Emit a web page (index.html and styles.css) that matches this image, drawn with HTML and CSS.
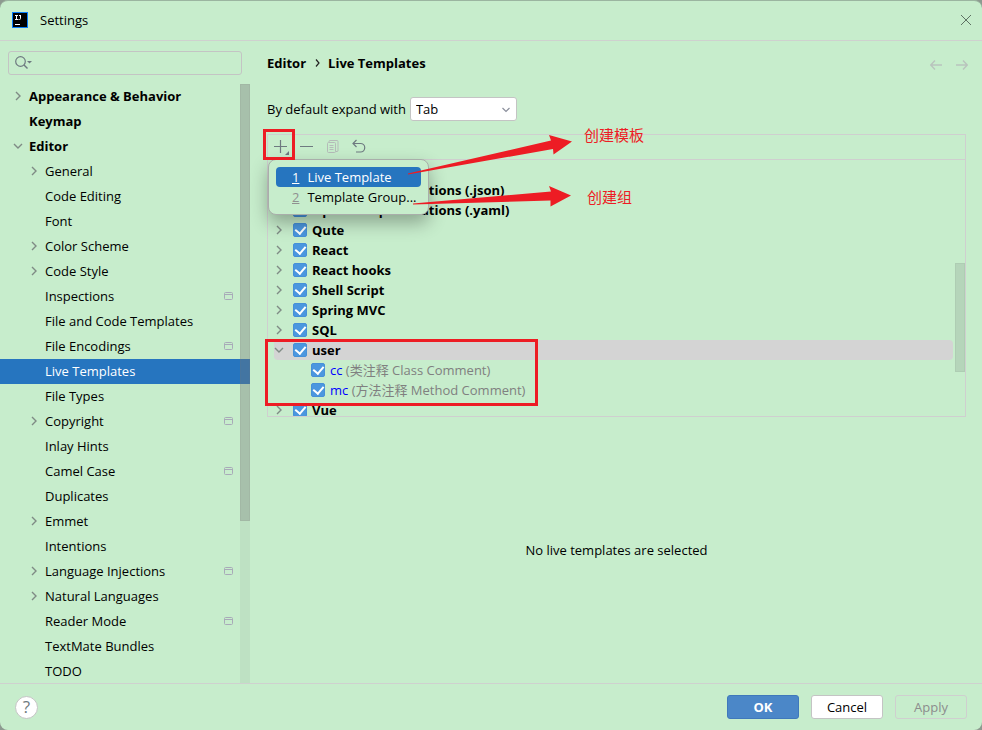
FILE: index.html
```html
<!DOCTYPE html>
<html lang="en">
<head>
<meta charset="utf-8">
<title>Settings</title>
<link rel="stylesheet" href="styles.css">
</head>
<body>
<svg class="symbols" aria-hidden="true">
  <symbol id="right" viewBox="0 0 10 10"><path d="M3 1l4 4-4 4" fill="none" stroke="#7f8b85" stroke-width="1.4"/></symbol>
  <symbol id="down" viewBox="0 0 10 10"><path d="M1 3l4 4 4-4" fill="none" stroke="#7f8b85" stroke-width="1.4"/></symbol>
  <symbol id="project" viewBox="0 0 10 8"><rect x=".5" y=".5" width="8" height="7" rx="1" fill="none" stroke="#a8aab8"/><path d="M1 2.5h7" stroke="#a8aab8"/></symbol>
</svg>
<div class="window">
  <header class="titlebar">
    <svg class="logo" viewBox="0 0 16 16" aria-hidden="true"><rect width="16" height="16" fill="#087cfa"/><rect x="1" y="1" width="14" height="14" fill="#000"/><path d="M3 3.500h3M4.500 3v4M3 7.500h3M7 3.500h2M8.500 3v3.500q0 1-1 1h-1" fill="none" stroke="#fff"/><path d="M3 12.500h5" stroke="#fff"/></svg>
    <h1>Settings</h1>
    <button class="close" type="button" aria-label="Close"><svg viewBox="0 0 10 10"><path d="M0 0l10 10M10 0L0 10" stroke="#5e7263" fill="none"/></svg></button>
  </header>
  <div class="main">
    <aside class="sidebar">
      <div class="search">
        <svg viewBox="0 0 17 14" aria-hidden="true"><circle cx="5.500" cy="5.500" r="4.800" fill="none" stroke="#6e7a80" stroke-width="1.200"/><path d="M9 9l3.500 3.500" stroke="#6e7a80" stroke-width="1.400"/><path d="M12 5h5l-2.500 2.500z" fill="#6e7a80"/></svg>
        <input type="text" aria-label="Search settings">
      </div>
      <div class="treewrap">
        <ul class="tree">
          <li class="top"><svg><use href="#right"/></svg><a href="#">Appearance &amp; Behavior</a></li>
          <li class="top"><a href="#">Keymap</a></li>
          <li class="top"><svg><use href="#down"/></svg><a href="#">Editor</a></li>
          <li><svg><use href="#right"/></svg><a href="#">General</a></li>
          <li><a href="#">Code Editing</a></li>
          <li><a href="#">Font</a></li>
          <li><svg><use href="#right"/></svg><a href="#">Color Scheme</a></li>
          <li><svg><use href="#right"/></svg><a href="#">Code Style</a></li>
          <li><a href="#">Inspections</a><svg class="scope"><use href="#project"/></svg></li>
          <li><a href="#">File and Code Templates</a></li>
          <li><a href="#">File Encodings</a><svg class="scope"><use href="#project"/></svg></li>
          <li class="selected"><a href="#">Live Templates</a></li>
          <li><a href="#">File Types</a></li>
          <li><svg><use href="#right"/></svg><a href="#">Copyright</a><svg class="scope"><use href="#project"/></svg></li>
          <li><a href="#">Inlay Hints</a></li>
          <li><a href="#">Camel Case</a><svg class="scope"><use href="#project"/></svg></li>
          <li><a href="#">Duplicates</a></li>
          <li><svg><use href="#right"/></svg><a href="#">Emmet</a></li>
          <li><a href="#">Intentions</a></li>
          <li><svg><use href="#right"/></svg><a href="#">Language Injections</a><svg class="scope"><use href="#project"/></svg></li>
          <li><svg><use href="#right"/></svg><a href="#">Natural Languages</a></li>
          <li><a href="#">Reader Mode</a><svg class="scope"><use href="#project"/></svg></li>
          <li><a href="#">TextMate Bundles</a></li>
          <li><a href="#">TODO</a></li>
        </ul>
        <div class="track"><div class="thumb"></div></div>
      </div>
    </aside>
    <main class="content">
      <div class="crumbs">
        <a href="#">Editor</a><svg viewBox="0 0 5 8" aria-hidden="true"><path d="M1 .5L4 4 1 7.500" fill="none" stroke="#222" stroke-width="1.200"/></svg><span>Live Templates</span>
        <div class="history">
          <button type="button" aria-label="Back"><svg viewBox="0 0 12 10"><path d="M12 5H1M5 .5L.7 5 5 9.500" fill="none" stroke="#b9c3bd" stroke-width="1.400"/></svg></button>
          <button type="button" aria-label="Forward"><svg viewBox="0 0 12 10"><path d="M0 5h11M7 .5L11.300 5 7 9.500" fill="none" stroke="#b9c3bd" stroke-width="1.400"/></svg></button>
        </div>
      </div>
      <div class="expand">
        <label for="expand">By default expand with</label>
        <div class="combo">
          <select id="expand"><option>Tab</option><option>Enter</option><option>Space</option></select>
          <svg viewBox="0 0 8 6" aria-hidden="true"><path d="M.5 1L4 4.500 7.500 1" fill="none" stroke="#8b8f9c" stroke-width="1.200"/></svg>
        </div>
      </div>
      <section class="panel">
        <div class="toolbar">
          <button type="button" aria-label="Add"><svg viewBox="0 0 16 16"><path d="M1 7.500h13M7.500 1v13" stroke="#6e7a80" stroke-width="1.200"/><path d="M16 12v4h-4z" fill="#6e7a80"/></svg></button>
          <button type="button" aria-label="Remove"><svg viewBox="0 0 16 16"><path d="M1 7.500h13" stroke="#6e7a80" stroke-width="1.200"/></svg></button>
          <button type="button" aria-label="Duplicate"><svg viewBox="0 0 16 16"><path d="M4 3.500V2.500q0-1 1-1h7q1 0 1 1v9q0 1-1 1h-1" fill="none" stroke="#b5bbb9"/><rect x="2.500" y="3.500" width="8" height="10" rx="1" fill="none" stroke="#b5bbb9"/><path d="M4.500 6.500h4M4.500 8.500h4M4.500 10.500h4" stroke="#b5bbb9"/></svg></button>
          <button type="button" aria-label="Revert"><svg viewBox="0 0 16 16"><path d="M5.500 1L2 4.500 5.500 8M2 4.500h7.500a4 4 0 0 1 0 8.500H5" fill="none" stroke="#6e7a80" stroke-width="1.200"/></svg></button>
        </div>
        <ul class="groups">
          <li><svg><use href="#right"/></svg><label><input type="checkbox" checked>OpenAPI Specifications (.json)</label></li>
          <li><svg><use href="#right"/></svg><label><input type="checkbox" checked>OpenAPI Specifications (.yaml)</label></li>
          <li><svg><use href="#right"/></svg><label><input type="checkbox" checked>Qute</label></li>
          <li><svg><use href="#right"/></svg><label><input type="checkbox" checked>React</label></li>
          <li><svg><use href="#right"/></svg><label><input type="checkbox" checked>React hooks</label></li>
          <li><svg><use href="#right"/></svg><label><input type="checkbox" checked>Shell Script</label></li>
          <li><svg><use href="#right"/></svg><label><input type="checkbox" checked>Spring MVC</label></li>
          <li><svg><use href="#right"/></svg><label><input type="checkbox" checked>SQL</label></li>
          <li class="current"><svg><use href="#down"/></svg><label><input type="checkbox" checked>user</label></li>
          <li class="leaf"><label><input type="checkbox" checked><b>cc</b> (类注释 Class Comment)</label></li>
          <li class="leaf"><label><input type="checkbox" checked><b>mc</b> (方法注释 Method Comment)</label></li>
          <li><svg><use href="#right"/></svg><label><input type="checkbox" checked>Vue</label></li>
        </ul>
        <div class="listthumb"></div>
        <div class="menu" role="menu">
          <button class="active" type="button" role="menuitem"><u>1</u>Live Template</button>
          <button type="button" role="menuitem"><u>2</u>Template Group...</button>
        </div>
        <div class="mark mark-add"></div>
        <div class="mark mark-user"></div>
        <svg class="arrows" viewBox="260 125 320 90" aria-hidden="true"><path d="M408 173.500L551 140.500 549 135 572 141.500 553.500 154.500 553 149 408 174.500zM413 203.500L551 191.500 549 186 571 195.500 550.500 206.500V200.500L413 204.500z" fill="#ed1c24"/></svg>
        <span class="note note-template">创建模板</span>
        <span class="note note-group">创建组</span>
      </section>
      <p class="empty">No live templates are selected</p>
    </main>
  </div>
  <footer class="footer">
    <button class="help" type="button" aria-label="Help">?</button>
    <div class="actions">
      <button class="ok" type="button">OK</button>
      <button type="button">Cancel</button>
      <button type="button" disabled>Apply</button>
    </div>
  </footer>
</div>
</body>
</html>
```
FILE: styles.css
```css
* { box-sizing: border-box; }
body {
  margin: 0;
  background: #8d9a90;
  color: #000;
  font: 13px/20px "Open Sans", "Noto Sans CJK SC", sans-serif;
}
button, input, select { font: inherit; color: inherit; margin: 0; }
button { padding: 0; border: 0; background: none; }
a { color: inherit; text-decoration: none; }
ul { list-style: none; margin: 0; padding: 0; }
svg { display: block; flex: none; }
.symbols { position: absolute; width: 0; height: 0; }

.window {
  display: flex;
  flex-direction: column;
  height: 100vh;
  background: #c7edcc;
  border-top: 1px solid #9bb5a0;
  border-radius: 8px;
  overflow: hidden;
}
.titlebar {
  display: flex;
  align-items: center;
  flex: none;
  height: 40px;
  padding: 0 11px 2px 12px;
  border-bottom: 1px solid #cfd1cf;
}
.logo { width: 16px; height: 16px; }
.titlebar h1 { margin: 0 0 0 12px; font-size: 13px; font-weight: 400; }
.close { margin-left: auto; }
.close svg { width: 10px; height: 10px; }

.main { display: flex; flex: 1; min-height: 0; }
.sidebar { display: flex; flex-direction: column; flex: none; width: 250px; padding-top: 10px; }
.search {
  display: flex;
  align-items: center;
  flex: none;
  height: 24px;
  margin: 0 8px 9px;
  padding-left: 6px;
  border: 1px solid #c4c4c4;
  border-radius: 3px;
}
.search svg { width: 17px; height: 14px; }
.search input { flex: 1; min-width: 0; border: 0; background: none; outline: 0; }
.treewrap { position: relative; flex: 1; min-height: 0; overflow: hidden; }
.tree li { display: flex; align-items: center; height: 25px; padding: 0 16px 1px 45px; }
.tree li > svg:first-child { width: 10px; height: 10px; margin: 0 6px 0 -16px; }
.tree .top { padding-left: 29px; font-weight: 700; }
.tree .scope { width: 10px; height: 8px; margin-left: auto; }
.tree .selected { background: #2675bf; color: #fff; }
.track { position: absolute; top: 0; right: 0; bottom: 0; width: 10px; background: rgba(120, 130, 120, .1); }
.thumb { height: 73%; background: rgba(115, 115, 115, .3); border: 1px solid rgba(115, 115, 115, .1); }

.content { display: flex; flex-direction: column; flex: 1; min-width: 0; padding: 12px 16px 0 17px; }
.crumbs { display: flex; align-items: center; font-weight: 700; }
.crumbs > svg { width: 5px; height: 8px; margin: 0 8px 0 9px; }
.history { display: flex; gap: 14px; margin: 4px -2px 0 auto; }
.history svg { width: 12px; height: 10px; }
.expand { display: flex; align-items: center; gap: 4px; margin: 24px 0 13px; }
.combo { position: relative; }
.combo select {
  display: block;
  appearance: none;
  width: 107px;
  height: 24px;
  padding: 0 5px;
  border: 1px solid #c4c4c4;
  border-radius: 3px;
  background: #fff;
}
.combo svg { position: absolute; right: 7px; top: 10px; width: 8px; height: 6px; pointer-events: none; }

.panel { position: relative; flex: none; border: 1px solid #cfcfcf; }
.toolbar { display: flex; align-items: center; gap: 10px; height: 25px; padding-left: 5px; border-bottom: 1px solid #cfcfcf; }
.toolbar svg { width: 16px; height: 16px; }
.groups { height: 256px; padding-top: 20px; overflow: hidden; font-weight: 700; }
.groups li { display: flex; align-items: center; height: 20px; margin: 0 12px 0 6px; }
.groups li > svg { width: 10px; height: 10px; margin-right: 9px; }
.groups label { display: flex; align-items: center; white-space: pre; }
.groups .current { border-radius: 4px; background: #d4d4d4; }
.groups .leaf { padding-left: 37px; color: #808080; font-weight: 400; }
.leaf b { color: #00f; font-weight: 400; }
.groups input {
  display: grid;
  place-items: center;
  appearance: none;
  width: 14px;
  height: 14px;
  margin-right: 5px;
  border: 1px solid #4690d8;
  border-radius: 2px;
  background: #4b97df;
}
.groups input::after {
  content: "";
  width: 5px;
  height: 8px;
  border: solid #fff;
  border-width: 0 2px 2px 0;
  transform: rotate(40deg);
  margin-bottom: 2px;
}
.listthumb { position: absolute; right: 0; top: 128px; width: 10px; height: 109px; background: #b5d5ba; border: 1px solid #aecdb3; }

.menu {
  position: absolute;
  left: 0;
  top: 24px;
  width: 161px;
  padding: 7px;
  border: 1px solid #a9aeaa;
  border-radius: 8px;
  background: #c7edcc;
  box-shadow: 0 8px 18px rgba(0, 0, 0, .3);
}
.menu button { display: flex; gap: 8px; width: 100%; height: 20px; padding-left: 16px; border-radius: 4px; white-space: nowrap; }
.menu u { color: #909090; }
.menu .active { background: #2675bf; color: #fff; }
.menu .active u { color: #fff; }

.mark { position: absolute; border: 3px solid #ed1c24; pointer-events: none; }
.mark-add { left: -5px; top: -6px; width: 32px; height: 31px; }
.mark-user { left: -3px; top: 204px; width: 273px; height: 67px; }
.arrows { position: absolute; left: -8px; top: -10px; width: 320px; height: 90px; pointer-events: none; }
.note { position: absolute; color: #ed1c24; font: 15px/20px "Noto Sans CJK SC", sans-serif; }
.note-template { left: 316px; top: -10px; }
.note-group { left: 319px; top: 52px; }
.empty { margin: auto; }

.footer {
  display: flex;
  align-items: center;
  justify-content: space-between;
  flex: none;
  height: 47px;
  padding: 0 15px;
  border-top: 1px solid #cfd1cf;
}
.help { width: 23px; height: 23px; border: 1px solid #c4c4c4; border-radius: 50%; background: #fff; color: #6e7a80; font-size: 17px; line-height: 20px; }
.actions { display: flex; gap: 12px; }
.actions button { width: 72px; height: 24px; border: 1px solid #c4c4c4; border-radius: 3px; background: #fff; }
.actions .ok { border-color: #3f78bb; background: #4b87c8; color: #fff; font-weight: 700; }
.actions button:disabled { border-color: #cfcfcf; background: none; color: #8c8c8c; }
```
